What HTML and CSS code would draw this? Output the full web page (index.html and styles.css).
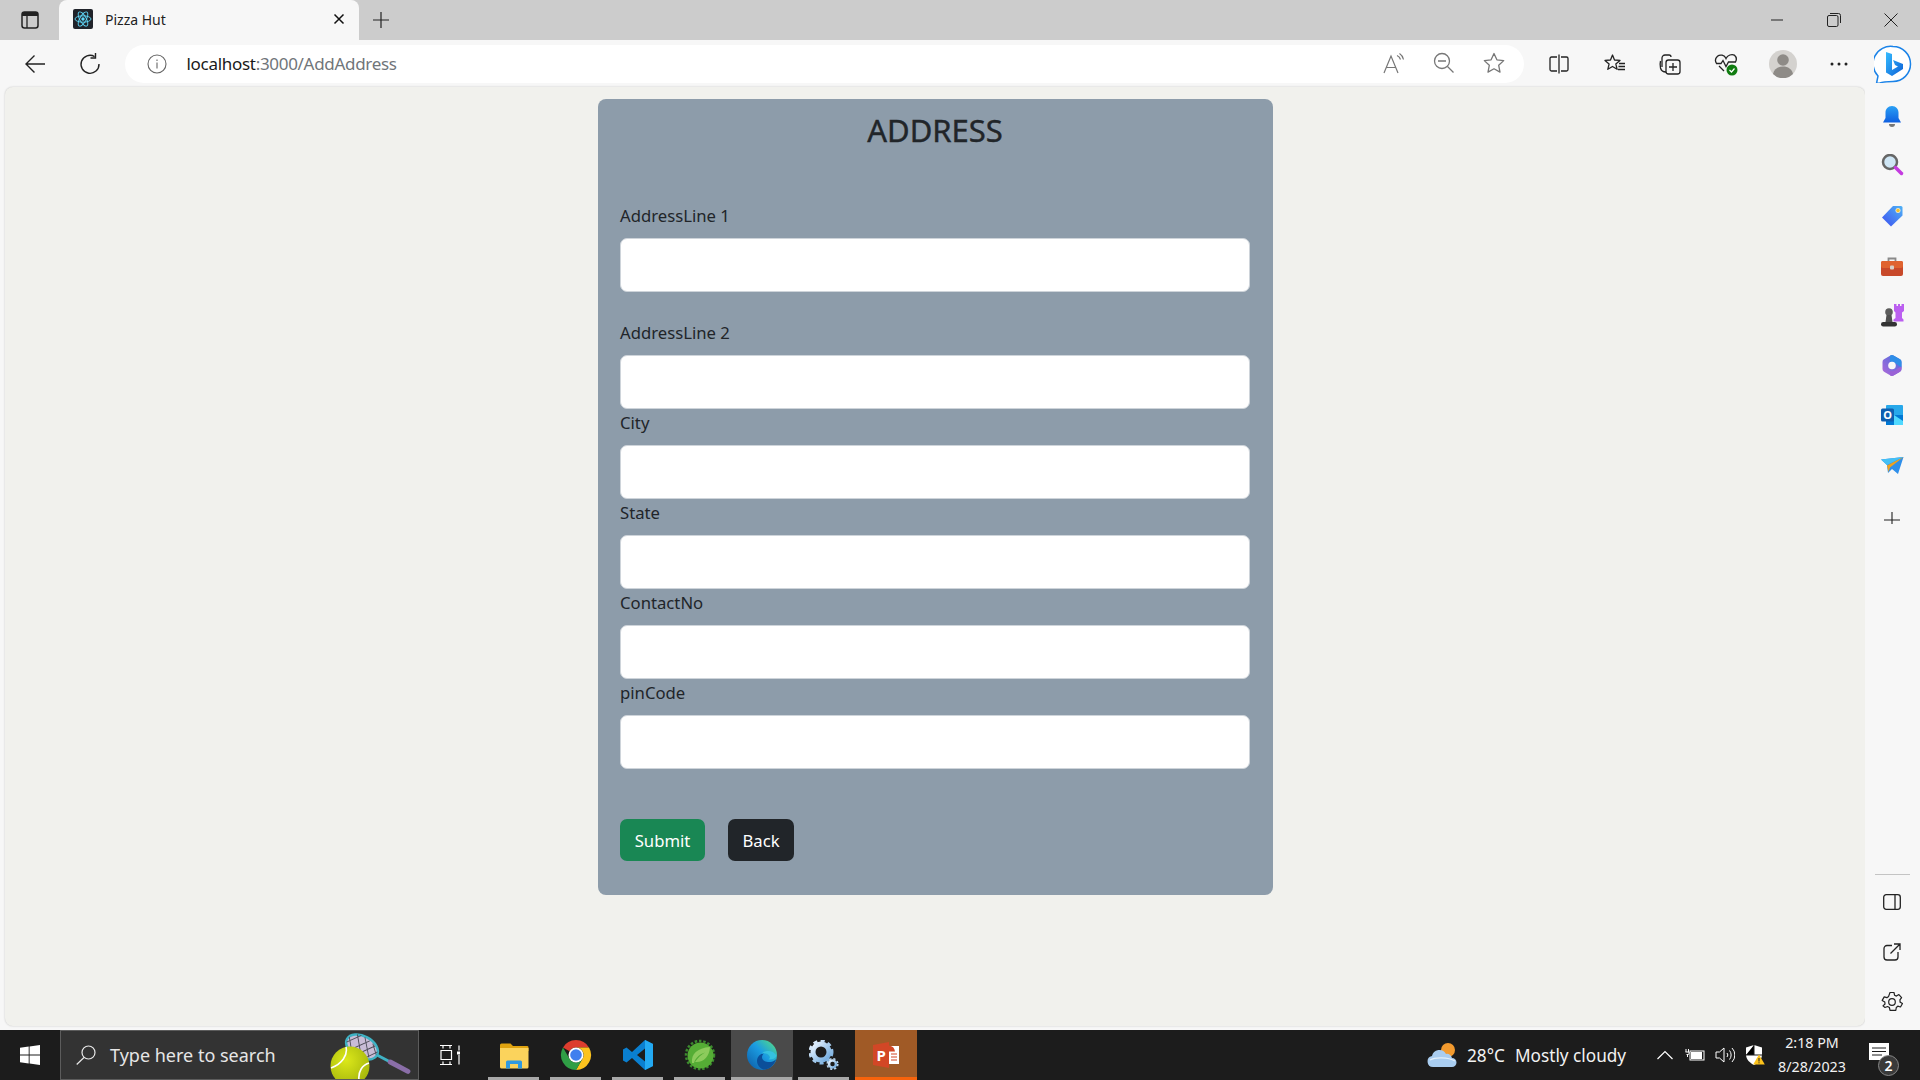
FILE: index.html
```html
<!DOCTYPE html>
<html lang="en">
<head>
<meta charset="utf-8">
<title>Pizza Hut</title>
<link rel="stylesheet" href="styles.css">
</head>
<body>
<div class="tabstrip">
  <div class="tab-toggle"><svg width="20" height="20" viewBox="0 0 20 20"><rect x="2" y="2" width="16" height="16" rx="2.500" fill="none" stroke="#222" stroke-width="1.500"/><path d="M2 4.500a2.500 2.500 0 0 1 2.500-2.500h11a2.500 2.500 0 0 1 2.500 2.500V6H2z" fill="#222"/><path d="M7 6v12" stroke="#222" stroke-width="1.300"/></svg></div>
  <div class="tab">
    <svg class="favicon" width="20" height="20" viewBox="0 0 20 20"><rect width="20" height="20" rx="2" fill="#20232a"/><g fill="none" stroke="#61dafb" stroke-width=".9"><ellipse cx="10" cy="10" rx="8" ry="3.200"/><ellipse cx="10" cy="10" rx="8" ry="3.200" transform="rotate(60 10 10)"/><ellipse cx="10" cy="10" rx="8" ry="3.200" transform="rotate(120 10 10)"/></g><circle cx="10" cy="10" r="1.700" fill="#61dafb"/></svg>
    <span class="tab-title">Pizza Hut</span>
    <svg class="tab-close" width="12" height="12" viewBox="0 0 12 12"><path d="M1.500 1.500l9 9m0-9l-9 9" stroke="#111" stroke-width="1.500"/></svg>
  </div>
  <div class="tab-new"><svg width="18" height="18" viewBox="0 0 18 18"><path d="M9 1v16M1 9h16" stroke="#222" stroke-width="1.200"/></svg></div>
  <div class="win-controls">
    <div class="win-btn"><svg width="14" height="14" viewBox="0 0 14 14"><path d="M1 7h12" stroke="#222" stroke-width="1"/></svg></div>
    <div class="win-btn"><svg width="14" height="14" viewBox="0 0 14 14" fill="none" stroke="#222"><rect x=".5" y="2.500" width="10.500" height="11" rx="1.500"/><path d="M3 .5h8.500a2 2 0 0 1 2 2V10"/></svg></div>
    <div class="win-btn"><svg width="14" height="14" viewBox="0 0 14 14"><path d="M.5.5l13 13m0-13l-13 13" stroke="#222" stroke-width="1"/></svg></div>
  </div>
</div>

<div class="toolbar">
  <div class="nav-btn"><svg width="22" height="20" viewBox="0 0 22 20" fill="none" stroke="#222" stroke-width="1.400"><path d="M21 10H2M10.500 1.500L2 10l8.500 8.500"/></svg></div>
  <div class="nav-btn reload"><svg width="22" height="22" viewBox="0 0 22 22" fill="none" stroke="#222" stroke-width="1.400"><path d="M15.600 3.600A9 9 0 1 0 20 11"/><path d="M16.500 0v5h-5"/></svg></div>
  <div class="addr">
    <svg class="info" width="20" height="20" viewBox="0 0 20 20" fill="none" stroke="#666" stroke-width="1.100"><circle cx="10" cy="10" r="9"/><path d="M10 8.500v6M10 5.500v1.400"/></svg>
    <span class="url"><span class="host">localhost</span>:3000/AddAddress</span>
    <div class="addr-icons">
      <div class="addr-icon"><svg width="24" height="24" viewBox="0 0 24 24" fill="none" stroke="#777" stroke-width="1.200"><path d="M2 21L9 4l7 17M4.500 15.500h9"/><path d="M15 3.500a6 6 0 0 1 3.500 4M17.500 1.500a9 9 0 0 1 4 6"/></svg></div>
      <div class="addr-icon"><svg width="22" height="22" viewBox="0 0 22 22" fill="none" stroke="#777" stroke-width="1.300"><circle cx="9" cy="9" r="7.500"/><path d="M5 9h8M14.500 14.500l6 6"/></svg></div>
      <div class="addr-icon"><svg width="22" height="22" viewBox="0 0 22 22" fill="none" stroke="#777" stroke-width="1.300"><path d="M11 1.500l2.900 6.300 6.800.8-5 4.700 1.300 6.800L11 16.800l-6 3.300 1.300-6.800-5-4.700 6.800-.8z" stroke-linejoin="round"/></svg></div>
    </div>
  </div>
  <div class="tools">
    <div class="tool"><svg width="20" height="20" viewBox="0 0 20 20" fill="none" stroke="#222" stroke-width="1.300"><path d="M8 3H2.500A1.500 1.500 0 0 0 1 4.500v11A1.500 1.500 0 0 0 2.500 17H8M12 3h5.500A1.500 1.500 0 0 1 19 4.500v11a1.500 1.500 0 0 1-1.500 1.500H12M10 .5v19"/></svg></div>
    <div class="tool"><svg width="22" height="22" viewBox="0 0 22 22" fill="none" stroke="#222" stroke-width="1.300"><path d="M8.500 2l2 5 5.500.4-4.200 3.500 1.300 5.400L8.500 13.500 3.800 16.300l1.300-5.400L1 7.400 6.500 7z" stroke-linejoin="round"/><path d="M15 10.500h6M14.500 13.500h6.500M14 16.500h7"/></svg></div>
    <div class="tool"><svg width="22" height="22" viewBox="0 0 22 22" fill="none" stroke="#222" stroke-width="1.300"><rect x="7" y="7" width="14" height="14" rx="2.500"/><path d="M14 10v8M10 14h8M3 14V5a3 3 0 0 1 3-3h4a2 2 0 0 1 2 2M7 19c-3 0-5-2-5.500-4-.3-1.500-.5-5 0-7"/></svg></div>
    <div class="tool"><svg width="24" height="24" viewBox="0 0 24 24"><path d="M12 6.500C10.500 3 6 2 3.500 4.300 1 6.600 1.200 9.500 2.500 11.500H7l2-3 3 6 2.500-4.500h7c1.200-2.200 1-5-1.200-6.900C18 1.800 13.500 3 12 6.500zM5 14l5 5" fill="none" stroke="#222" stroke-width="1.300"/><circle cx="18" cy="18" r="5.500" fill="#107c10"/><path d="M15.500 18l2 2 3-3.500" fill="none" stroke="#fff" stroke-width="1.200"/></svg></div>
    <div class="tool"><svg width="28" height="28" viewBox="0 0 28 28"><circle cx="14" cy="14" r="14" fill="#d4d2cf"/><circle cx="14" cy="10" r="5.800" fill="#8e8b87"/><path d="M4 24c1-5 5-7.500 10-7.500s9 2.500 10 7.500a14 14 0 0 1-20 0z" fill="#8e8b87"/></svg></div>
    <div class="tool"><svg width="18" height="4" viewBox="0 0 18 4" fill="#222"><circle cx="2" cy="2" r="1.500"/><circle cx="9" cy="2" r="1.500"/><circle cx="16" cy="2" r="1.500"/></svg></div>
    <div class="tool"><svg width="38" height="38" viewBox="0 0 38 38"><defs><linearGradient id="bingA" x1="0" y1="0" x2="1" y2="1"><stop offset="0" stop-color="#37bdff"/><stop offset="1" stop-color="#0c5fd6"/></linearGradient></defs><path d="M19 1.500a17.500 17.500 0 0 1 0 35c-4 0-10 0-13 1.500l-3.500 .5 1.500-7.500A17.500 17.500 0 0 1 19 1.500z" fill="#fff" stroke="#1b83e8" stroke-width="1.500"/><path d="M12 7l6 2v16l6-3.500-3-1.500-2-5 10 4v5l-11 7-6-3.500z" fill="url(#bingA)"/></svg></div>
  </div>
</div>

<div class="main">
  <div class="viewport">
    <form class="card">
      <h2 class="card-title">ADDRESS</h2>
      <div class="field field-wide"><label class="field-label">AddressLine 1</label><input class="field-input" type="text"></div>
      <div class="field"><label class="field-label">AddressLine 2</label><input class="field-input" type="text"></div>
      <div class="field"><label class="field-label">City</label><input class="field-input" type="text"></div>
      <div class="field"><label class="field-label">State</label><input class="field-input" type="text"></div>
      <div class="field"><label class="field-label">ContactNo</label><input class="field-input" type="text"></div>
      <div class="field"><label class="field-label">pinCode</label><input class="field-input" type="text"></div>
      <div class="actions">
        <button class="btn btn-submit" type="button">Submit</button>
        <button class="btn btn-back" type="button">Back</button>
      </div>
    </form>
  </div>
  <aside class="sidebar">
    <div class="side-btn"><svg width="24" height="24" viewBox="0 0 24 24"><defs><linearGradient id="bellG" x1="0" y1="0" x2="0" y2="1"><stop offset="0" stop-color="#2aa0f5"/><stop offset="1" stop-color="#0f5fe0"/></linearGradient></defs><path d="M12 2c-4 0-6.500 3-6.500 6.500V14L3 18.500h18L18.500 14V8.500C18.500 5 16 2 12 2z" fill="url(#bellG)"/><path d="M9 20h6a3 3 0 0 1-6 0z" fill="#777"/></svg></div>
    <div class="side-btn"><svg width="24" height="24" viewBox="0 3 24 24"><circle cx="10" cy="11" r="7" fill="#cfe6f5" stroke="#666" stroke-width="2.500"/><path d="M15.500 16.500l6 6" stroke="#c43be0" stroke-width="3.500" stroke-linecap="round"/></svg></div>
    <div class="side-btn"><svg width="24" height="24" viewBox="0 1 24 24"><defs><linearGradient id="tagG" x1="0" y1="1" x2="1" y2="0"><stop offset="0" stop-color="#3d4ff0"/><stop offset="1" stop-color="#4fb2f5"/></linearGradient></defs><path d="M13 3h8a1.500 1.500 0 0 1 1.500 1.500v8L11 23.500 2 14.500z" fill="url(#tagG)"/><circle cx="18" cy="7.500" r="2.200" fill="#f5c12e" stroke="#fff" stroke-width=".6"/></svg></div>
    <div class="side-btn"><svg width="24" height="24" viewBox="0 0 24 24"><path d="M8.500 7V4.500h7V7" fill="none" stroke="#8a8a8a" stroke-width="1.800"/><rect x="1" y="7" width="22" height="15" rx="2" fill="#c8492a"/><rect x="1" y="7" width="22" height="7" rx="2" fill="#e0632f"/><rect x="10" y="11.500" width="4" height="4" rx="1" fill="#d8d0c8"/></svg></div>
    <div class="side-btn"><svg width="24" height="24" viewBox="0 1 24 24"><circle cx="9" cy="9" r="3.800" fill="#5c5c5c"/><path d="M6.500 12h5l1 7h-7z" fill="#4f4f4f"/><rect x="1" y="19" width="16" height="4.500" rx="2.200" fill="#333"/><path d="M14 1h2.500v2H18V1h2v2h1.500V1H24v7l-2 1.500V15l1.500 1.500v2H13.500v-2L15.500 15V9.500L14 8z" fill="#bb5ff0"/></svg></div>
    <div class="side-btn"><svg width="24" height="24" viewBox="0 1 24 24"><defs><linearGradient id="mG" x1="0" y1="1" x2="1" y2="0"><stop offset="0" stop-color="#b468d8"/><stop offset="1" stop-color="#3f6fe0"/></linearGradient></defs><path d="M13.500 2.500L20 6.300a3 3 0 0 1 1.500 2.600v7.200a3 3 0 0 1-1.500 2.600l-6.500 3.800a3 3 0 0 1-3 0L4 18.700a3 3 0 0 1-1.500-2.600V8.900A3 3 0 0 1 4 6.300l6.500-3.800a3 3 0 0 1 3 0z" fill="url(#mG)"/><path d="M10 2.800a3 3 0 0 1 3.500-.3L20 6.300a3 3 0 0 1 1.500 2.600v5.500L15 10c-1.500-1-3-1.500-5-1z" fill="#2f8ee8"/><path d="M21.500 13.500v2.600a3 3 0 0 1-1.500 2.600l-6.500 3.800a3 3 0 0 1-3.500-.3V18c3 .8 6-.5 8-3z" fill="#9a62d6"/><circle cx="12" cy="12.500" r="3.800" fill="#f7f7f7"/></svg></div>
    <div class="side-btn"><svg width="24" height="24" viewBox="0 1 24 24"><rect x="6" y="2" width="17" height="20" rx="1" fill="#28a8ea"/><path d="M6 12h17v10H6z" fill="#0078d4"/><path d="M14 12l9 6v4H14z" fill="#50d9ff"/><rect x="1" y="5.500" width="13" height="13" rx="1.500" fill="#0f5fb0"/><text class="o-mark" x="7.500" y="16">O</text></svg></div>
    <div class="side-btn"><svg width="24" height="24" viewBox="0 1 24 24"><path d="M1 6.500L23.500 4 18 21l-6-5-4 4-1-8z" fill="#2f8fea"/><path d="M1 6.500L23.500 4 7 12z" fill="#45c0f5"/><path d="M23.500 4L7 12.500l1.500 6.500 1.500-4.500z" fill="#f0a21e"/></svg></div>
    <div class="side-btn"><svg width="16" height="16" viewBox="0 -4 16 16"><path d="M8 0v16M0 8h16" stroke="#222" stroke-width="1.100"/></svg></div>
    <div class="side-bottom">
      <div class="side-divider"></div>
      <div class="side-btn"><svg width="18" height="16" viewBox="0 0 18 16" fill="none" stroke="#222" stroke-width="1.300"><rect x=".7" y=".7" width="16.600" height="14.600" rx="2.500"/><path d="M12 .7v14.600"/></svg></div>
      <div class="side-btn"><svg width="18" height="18" viewBox="0 0 18 18" fill="none" stroke="#222" stroke-width="1.300"><path d="M9 2.500H4A3 3 0 0 0 1 5.500v8.500a3 3 0 0 0 3 3h8a3 3 0 0 0 3-3V9M7.500 10.500L16.500 1.500M11 1h6v6"/></svg></div>
      <div class="side-btn"><svg width="22" height="22" viewBox="0 0 22 22" fill="none" stroke="#222" stroke-width="1.200"><circle cx="11" cy="11" r="3.300"/><path d="M9 1.500h4l.6 2.800 1.800.8 2.500-1.500 2.700 3-1.700 2.300.3 2-.3 0 2.600 1.600-2 3.500-2.700-.8-1.500 1.300-.5 2.800H9l-.6-2.800-1.800-1-2.600 1L2 14.900l2-1.900-.2-2L1.200 9.400l2-3.500 2.700.8 1.700-1.300z" stroke-linejoin="round"/></svg></div>
    </div>
  </aside>
</div>

<footer class="taskbar">
  <div class="start"><svg width="20" height="20" viewBox="0 0 20 20" fill="#fff"><path d="M0 2.800l8.700-1.200v8H0zM9.600 1.400L20 0v9.600H9.600zM0 10.500h8.700v8L0 17.300zM9.600 10.500H20V20L9.600 18.600z"/></svg></div>
  <div class="search">
    <svg class="search-icon" width="20" height="20" viewBox="0 0 20 20" fill="none" stroke="#e8e8e8" stroke-width="1.200"><circle cx="12.500" cy="7.500" r="6.500"/><path d="M8 12.500L.7 19.500"/></svg>
    <span class="search-text">Type here to search</span>
    <svg class="search-art" width="82" height="48" viewBox="0 0 82 48"><g transform="rotate(-62 32 16)"><ellipse cx="32" cy="16" rx="11" ry="17" fill="#c9bcd6" stroke="#3fb2c4" stroke-width="2.500"/><path d="M23 6l18 14M22 14l17 13M24 24l11 8M29 0l13 10M41 6L23 20M42 14L26 27M40 24l-8 8M35 0L22 10" stroke="#4a4a55" stroke-width=".9"/><path d="M32 33v15" stroke="#3fb2c4" stroke-width="3"/><path d="M32 48v20" stroke="#8a6ea8" stroke-width="5" stroke-linecap="round"/></g><defs><radialGradient id="ballG" cx=".4" cy=".35" r=".8"><stop offset="0" stop-color="#dce81a"/><stop offset="1" stop-color="#9cae0a"/></radialGradient></defs><circle cx="20" cy="35" r="19.500" fill="url(#ballG)"/><path d="M16 16c2 8-4 17-15 21M39 32c-7 2-11 9-10 17" fill="none" stroke="#fff" stroke-width="1.600"/></svg>
  </div>
  <div class="taskview"><svg width="20" height="20" viewBox="0 0 20 20" fill="none" stroke="#fff" stroke-width="1.200"><path d="M0 .5h12M0 19.500h12M1 5.500h10.500v9H1z"/><path d="M3 .5v3M10 .5v3M3 19.500v-3M10 19.500v-3M19 .5v5M19 10v9.500"/><rect x="17" y="6.500" width="3.500" height="3" fill="#fff" stroke="none"/></svg></div>
  <div class="task-apps">
    <div class="app"><svg width="30" height="28" viewBox="0 0 30 28"><path d="M1 4a1.500 1.500 0 0 1 1.500-1.500h9L14 5h14a1.500 1.500 0 0 1 1.500 1.500V10H1z" fill="#e0a30f"/><path d="M1 7h28.500v19a1.500 1.500 0 0 1-1.500 1.500H2.500A1.500 1.500 0 0 1 1 26z" fill="#fbd35c"/><path d="M7 27.500V21a1.500 1.500 0 0 1 1.500-1.500h13A1.500 1.500 0 0 1 23 21v6.500h-4V23h-8v4.500z" fill="#2f9ae0"/></svg></div>
    <div class="app"><svg width="32" height="32" viewBox="0 0 32 32"><path d="M3 8.500A15 15 0 0 1 29 8.500H16A7.500 7.500 0 0 0 9.500 12.200z" fill="#dc3d2e"/><path d="M29 8.500A15 15 0 0 1 16 31l6.500-11.200A7.500 7.500 0 0 0 16 8.500z" fill="#fcc31e"/><path d="M16 31A15 15 0 0 1 3 8.500l6.500 11.300a7.500 7.500 0 0 0 13 0z" fill="#2f9e45"/><circle cx="16" cy="16" r="7.500" fill="#fff"/><circle cx="16" cy="16" r="5.800" fill="#3f7fee"/></svg></div>
    <div class="app"><svg width="32" height="32" viewBox="0 0 32 32"><path d="M23 1l8 4v22l-8 4L10 19 4.500 23.500 1 21.500v-11L4.500 8.500 10 13z M23 9.500L15 16l8 6.500z" fill="#0a7fd0" fill-rule="evenodd"/><path d="M23 1l8 4v22l-8 4z" fill="#23a9f2"/></svg></div>
    <div class="app"><svg width="32" height="32" viewBox="0 0 32 32"><circle cx="16" cy="16" r="14" fill="none" stroke="#3c8a2e" stroke-width="2.500" stroke-dasharray="2.500 1.800"/><circle cx="16.500" cy="16.500" r="13" fill="#55ad35"/><path d="M8 24C7 15 13 9 26 8c-.5 10-7 16-15 15 3-4.500 6.500-7.500 10-9.500-5 1.500-9.500 5-11 10.500z" fill="#8ccb5c"/></svg></div>
    <div class="app app-active"><svg width="32" height="32" viewBox="0 0 32 32"><defs><linearGradient id="edgeA" x1="0" y1="1" x2="1" y2="0"><stop offset="0" stop-color="#0c59a4"/><stop offset=".55" stop-color="#1b9de2"/><stop offset="1" stop-color="#5be37a"/></linearGradient></defs><circle cx="16" cy="16" r="15" fill="url(#edgeA)"/><path d="M31 17c0 4-4 6-8 6-3 0-7-1-7-5 0-1.500 1-3 2-3.500-3.500 0-7 3-7 7.500 0 4 3.500 7.500 6 8.500 7 .5 13-6 14-13.500z" fill="#0b4f9a"/><path d="M16 14.500c3-.5 6 0 7.500 2.500 1 1.500 0 2.500-1 3.500 4 0 7-1 8-3.500-.5-1-3-5-7.500-5-3 0-6 .5-7 2.500z" fill="#35c1e0"/></svg></div>
    <div class="app"><svg width="30" height="30" viewBox="0 0 30 30"><defs><linearGradient id="gearG" x1="0" y1="0" x2="1" y2="1"><stop offset="0" stop-color="#eaf4ff"/><stop offset="1" stop-color="#6ba7dc"/></linearGradient></defs><circle cx="12" cy="12" r="8" fill="none" stroke="url(#gearG)" stroke-width="5"/><circle cx="12" cy="12" r="11" fill="none" stroke="url(#gearG)" stroke-width="3" stroke-dasharray="4 3.300"/><circle cx="23.500" cy="24" r="3.500" fill="none" stroke="url(#gearG)" stroke-width="2.500"/><circle cx="23.500" cy="24" r="5.300" fill="none" stroke="#b9d6ef" stroke-width="1.600" stroke-dasharray="2.200 2"/></svg></div>
    <div class="app app-open"><svg width="26" height="28" viewBox="0 0 26 28"><path d="M16 1v26L0 24V4z" fill="#d24726"/><rect x="16" y="5" width="10" height="18" fill="#fff"/><path d="M18 13h6M18 16h6M18 19h6" stroke="#d24726" stroke-width="1.200"/><path d="M16 4.500a7 7 0 0 1 6 6h-6z" fill="#d24726"/><text class="p-mark" x="3.500" y="20">P</text></svg></div>
  </div>
  <div class="tray">
    <div class="weather">
      <svg class="weather-icon" width="30" height="26" viewBox="0 0 30 26"><circle cx="21" cy="8" r="7" fill="#f29a2e"/><path d="M6 25a5.500 5.500 0 0 1-1-10.900A7.500 7.500 0 0 1 19 12a5 5 0 0 1 6 4 4.500 4.500 0 0 1 0 9z" fill="#a9cdf0"/><path d="M3 18c5-3 18-3 25 1" fill="none" stroke="#e4f0fb" stroke-width="1.200"/></svg>
      <span class="temp">28°C</span>
      <span class="cond">Mostly cloudy</span>
    </div>
    <div class="tray-icon"><svg width="16" height="10" viewBox="0 0 16 10" fill="none" stroke="#fff" stroke-width="1.200"><path d="M.5 9L8 1.500 15.500 9"/></svg></div>
    <div class="tray-icon"><svg width="20" height="14" viewBox="0 0 20 14"><path d="M1 1v3M3.500 1v3M.5 4h3.500v1.500a1 1 0 0 1-1 1H1.500M2.500 6.500V9" fill="none" stroke="#fff" stroke-width="1"/><rect x="5" y="3" width="14" height="9" fill="none" stroke="#fff"/><rect x="6" y="4" width="11" height="7" fill="#fff"/></svg></div>
    <div class="tray-icon"><svg width="20" height="18" viewBox="0 0 20 18" fill="none" stroke="#fff" stroke-width="1"><path d="M1 6h3.500L9 2v14l-4.500-4H1zM12 7a3 3 0 0 1 0 4M14.500 4.500a7 7 0 0 1 0 9M17 2a10 10 0 0 1 0 14"/></svg></div>
    <div class="tray-icon"><svg width="20" height="20" viewBox="0 0 20 20"><path d="M9 0l8 2.500v7c0 5-4 8.500-8 10.500C5 18 1 14.500 1 9.500v-7z" fill="#fff"/><path d="M9 0v10H1M9 10h8" stroke="#1c1c1c"/><path d="M14 9.500l5.800 10H8.200z" fill="#fcc21b"/><path d="M14 13v3.500M14 17.300v1" stroke="#222"/></svg></div>
    <div class="clock"><span>2:18 PM</span><span>8/28/2023</span></div>
    <div class="notify">
      <svg width="20" height="18" viewBox="0 0 20 18"><path d="M0 0h20v17H0z" fill="#fff"/><path d="M3 5h14M3 8.500h14M3 12h10" stroke="#1c1c1c" stroke-width="1"/></svg>
      <span class="notify-badge">2</span>
    </div>
  </div>
</footer>
</body>
</html>
```
FILE: styles.css
```css
* { box-sizing: border-box; }
html, body { margin: 0; padding: 0; }
body {
  width: 1920px;
  height: 1080px;
  overflow: hidden;
  display: flex;
  flex-direction: column;
  font-family: "Noto Sans", "Open Sans", sans-serif;
  background: #f7f7f7;
  color: #212529;
}

/* tab strip */
.tabstrip { height: 40px; flex: none; display: flex; background: #cccccc; }
.tab-toggle { width: 59px; display: flex; align-items: center; justify-content: center; }
.tab { width: 300px; display: flex; align-items: center; padding-left: 14px; padding-bottom: 2px; background: #f7f7f7; border-radius: 8px 8px 0 0; }
.favicon { flex: none; }
.tab-title { margin-left: 12px; font-size: 14px; color: #222; }
.tab-close { margin-left: auto; margin-right: 14px; }
.tab-new { width: 44px; display: flex; align-items: center; justify-content: center; }
.win-controls { margin-left: auto; margin-right: 1px; display: flex; }
.win-btn { width: 57px; display: flex; align-items: center; justify-content: center; }

/* toolbar */
.toolbar { height: 47px; flex: none; display: flex; align-items: center; padding-left: 12px; background: #f7f7f7; }
.nav-btn { width: 46px; display: flex; justify-content: center; }
.reload { margin-left: 9px; }
.addr { width: 1399.5px; height: 38px; margin-left: 11.500px; display: flex; align-items: center; padding-left: 22px; background: #fff; border-radius: 19px; }
.info { flex: none; }
.url { margin-left: 20px; font-size: 17px; color: #70757a; letter-spacing: -.3px; }
.host { color: #1a1a1a; }
.addr-icons { margin-left: auto; margin-right: 5px; display: flex; }
.addr-icon { width: 50px; display: flex; justify-content: center; }
.tools { margin-left: 7px; display: grid; grid-template-columns: 56.500px 55.500px 54.500px 56.500px 57.500px 55px 53.500px; }
.tool { display: flex; align-items: center; justify-content: center; height: 38px; }

/* page area */
.main { height: 943px; flex: none; display: flex; }
.viewport { width: 1860px; height: 939px; margin-left: 5px; display: flex; flex-direction: column; align-items: center; padding-top: 12px; background: #f1f1ed; border-radius: 8px; box-shadow: 0 0 2px rgba(0,0,0,.22); }
.card { width: 675px; padding: 10px 22.500px 34px 22.500px; background: #8d9caa; border-radius: 8px; }
.card-title { margin: 0 0 52px; font-size: 31px; font-weight: 400; -webkit-text-stroke: .4px #212529; line-height: 42px; text-align: center; color: #212529; }
.field { margin-bottom: 1.200px; }
.field-wide { margin-bottom: 28.200px; }
.field-label { display: block; margin-bottom: 8.800px; font-size: 16.700px; line-height: 26.400px; color: #212529; }
.field-input { display: block; width: 100%; height: 53.600px; background: #fff; border: 1px solid #ced4da; border-radius: 7px; outline: none; }
.actions { display: flex; gap: 23px; margin-top: 50.600px; }
.btn { height: 42px; padding: 0; border: 0; border-radius: 7px; color: #fff; font: 16.700px "Noto Sans", "Open Sans", sans-serif; }
.btn-submit { width: 85px; background: #198754; }
.btn-back { width: 66px; background: #212529; }

/* sidebar */
.sidebar { width: 55px; display: flex; flex-direction: column; padding: 4px 1px 3px 0; background: #f7f7f7; }
.side-btn { height: 50px; flex: none; display: flex; align-items: center; justify-content: center; }
.side-bottom { margin-top: auto; }
.side-divider { width: 35px; height: 1px; margin: 0 auto 2px 10px; background: #c4c4c4; }
.o-mark { font: 700 11px "Noto Sans", sans-serif; fill: #fff; text-anchor: middle; }
.p-mark { font: 700 15px "Noto Sans", sans-serif; fill: #fff; }

/* taskbar */
.taskbar { height: 50px; flex: none; display: flex; align-items: stretch; background: #1c1c1c; color: #fff; }
.start { width: 60px; display: flex; align-items: center; justify-content: center; }
.search { position: relative; width: 359px; display: flex; align-items: center; padding-left: 15px; overflow: hidden; background: #333; border: 1px solid #5c5c5c; }
.search-icon { flex: none; }
.search-text { margin-left: 14px; font-size: 18px; color: #e6e6e6; }
.search-art { position: absolute; right: 6px; top: 0; }
.taskview { width: 64px; display: flex; align-items: center; justify-content: center; padding-right: 3px; }
.task-apps { display: flex; }
.app { position: relative; width: 62px; display: flex; align-items: center; justify-content: center; }
.app::after { content: ""; position: absolute; left: 5px; right: 6px; bottom: 0; height: 3px; background: #a8a8a8; }
.app-active { background: #4a4a4a; }
.app-active::after { left: 0; right: 1px; }
.app-open { background: #a05a26; }
.app-open::after { left: 0; right: 0; background: #f7630c; }
.tray { margin-left: auto; display: flex; align-items: center; }
.weather { width: 223px; display: flex; align-items: center; font-size: 17.200px; color: #f2f2f2; }
.weather-icon { flex: none; }
.temp { width: 48px; margin-left: 10px; }
.cond { white-space: nowrap; }
.tray-icon { width: 30px; display: flex; justify-content: center; }
.clock { width: 84px; display: flex; flex-direction: column; align-items: center; font-size: 14.300px; line-height: 24px; color: #f2f2f2; }
.notify { position: relative; width: 66px; display: flex; justify-content: flex-start; padding-left: 15px; padding-bottom: 6px; }
.notify-badge { position: absolute; left: 24px; top: 12px; width: 21px; height: 21px; display: flex; align-items: center; justify-content: center; font-size: 14px; font-weight: 600; color: #fff; background: #3a3a3a; border: 1px solid #888; border-radius: 50%; }
```
